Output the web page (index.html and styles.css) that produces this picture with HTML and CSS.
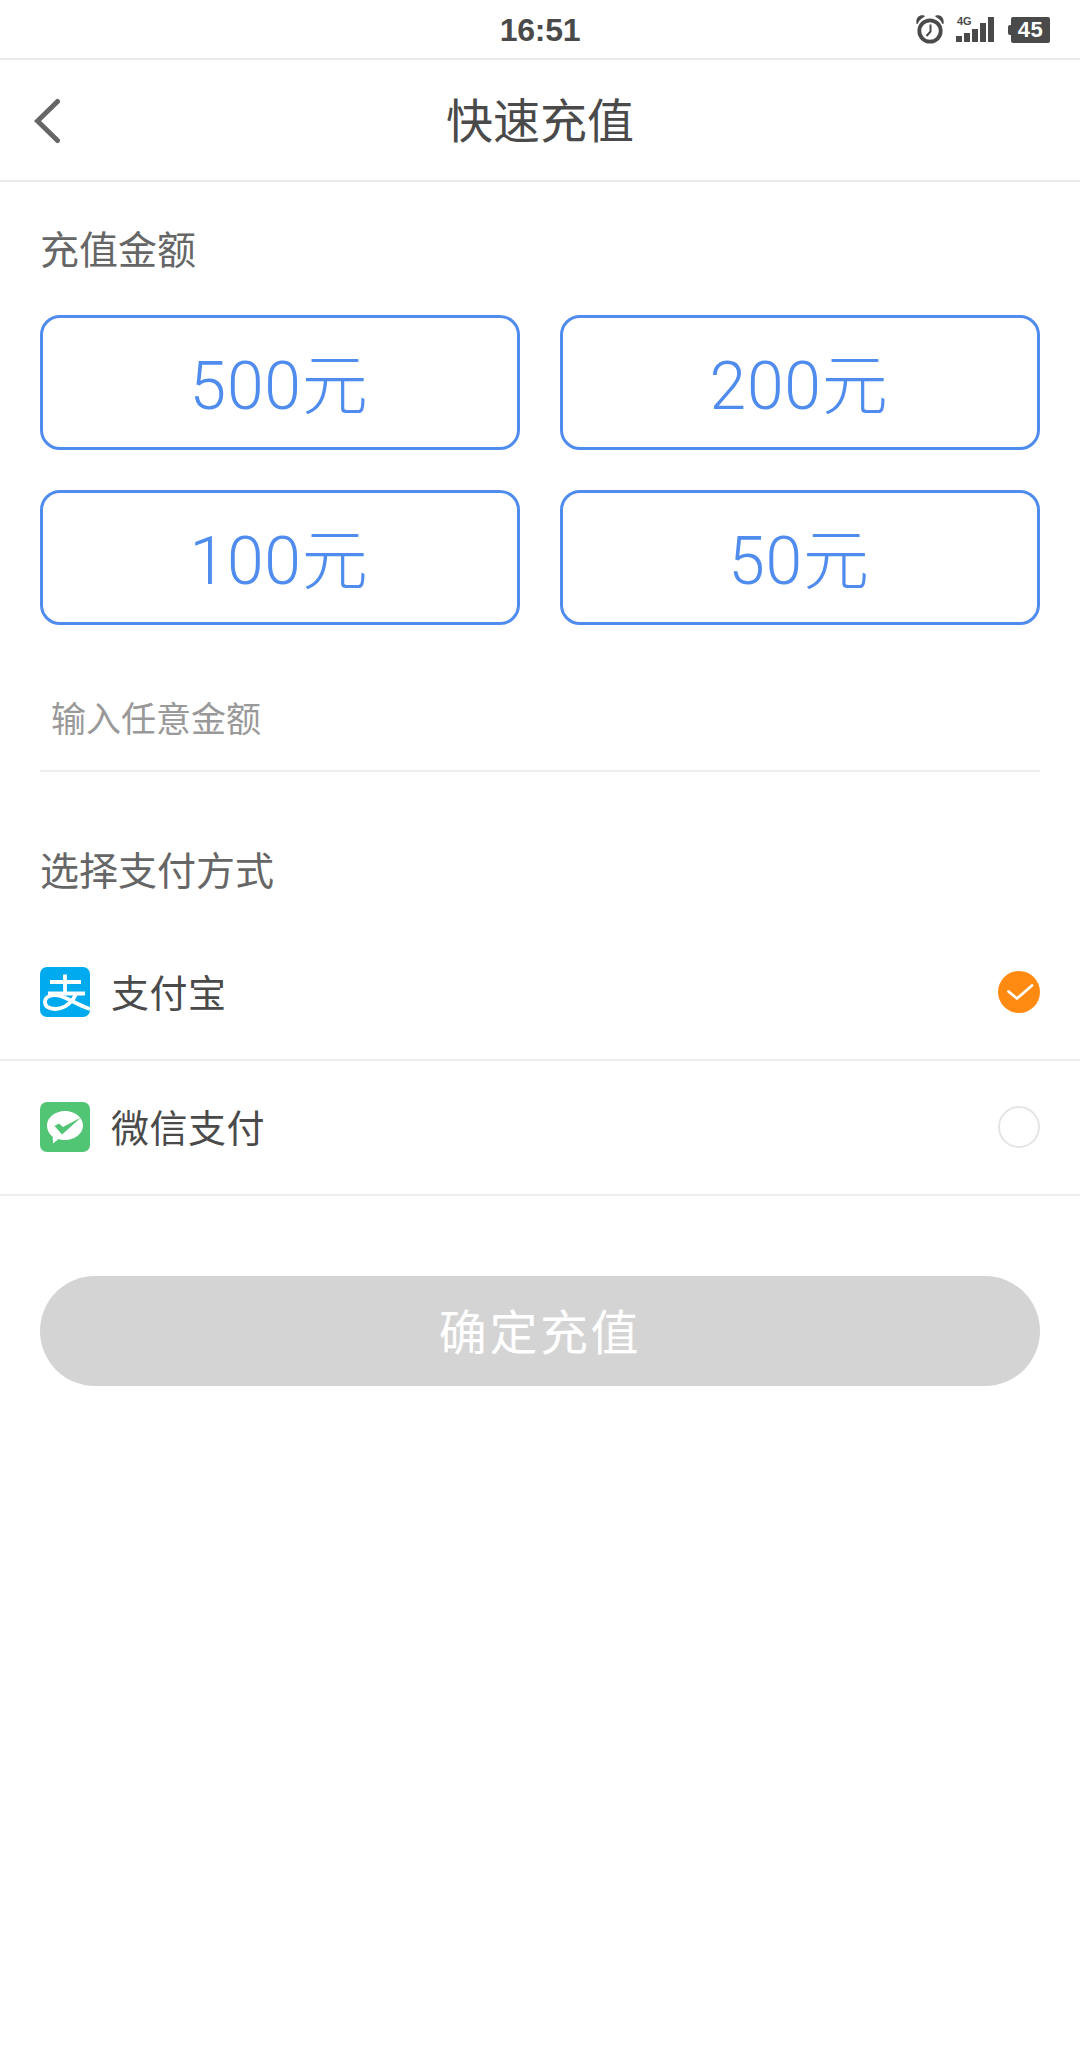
FILE: index.html
```html
<!DOCTYPE html>
<html lang="zh-CN">
<head>
  <meta charset="UTF-8">
  <meta name="viewport" content="width=device-width, initial-scale=1.0">
  <title>快速充值</title>
  <link rel="stylesheet" href="styles.css">
</head>
<body>

<!-- Status bar -->
<div class="status-bar">
  <span class="status-time">16:51</span>
  <div class="status-icons">
    <svg class="icon-alarm" width="28" height="30" viewBox="0 0 28 30">
      <circle cx="14" cy="17" r="10.700" fill="none" stroke="#4a4a4a" stroke-width="3.800"/>
      <path d="M14.500 10.500v7l-4 4.500" fill="none" stroke="#4a4a4a" stroke-width="2"/>
      <path d="M0.500 9.500C-.5 4 3 .5 8 1.500c.8.2 1 .8.4 1.200C5 4.500 3 6.500 1.800 9.700c-.3.600-1.100.500-1.300-.2zM27.500 9.500C28.500 4 25 .5 20 1.500c-.8.2-1 .8-.4 1.200 3.400 1.800 5.400 3.800 6.600 7 .3.600 1.100.500 1.300-.2z" fill="#4a4a4a"/>
    </svg>
    <div class="signal">
      <span class="signal-label">4G</span>
      <div class="signal-bars">
        <span class="bar bar-1"></span>
        <span class="bar bar-2"></span>
        <span class="bar bar-3"></span>
        <span class="bar bar-4"></span>
        <span class="bar bar-5"></span>
      </div>
    </div>
    <div class="battery">
      <span class="battery-cap"></span>
      <span class="battery-body">45</span>
    </div>
  </div>
</div>

<!-- Nav -->
<div class="nav">
  <svg class="nav-back" width="28" height="46" viewBox="0 0 28 46">
    <path d="M23.500 3.500L3.500 23l20 19.500" fill="none" stroke="#666" stroke-width="5" stroke-linecap="round"/>
  </svg>
  <h1 class="nav-title">快速充值</h1>
</div>

<!-- Amount -->
<div class="section">
  <div class="section-label">充值金额</div>
  <div class="amount-grid">
    <button class="amount-btn">500元</button>
    <button class="amount-btn">200元</button>
    <button class="amount-btn">100元</button>
    <button class="amount-btn">50元</button>
  </div>
  <div class="amount-input">输入任意金额</div>
  <div class="section-label pay-label">选择支付方式</div>
</div>

<!-- Pay methods -->
<div class="pay-row">
  <svg class="pay-icon" width="50" height="50" viewBox="0 0 50 50">
    <rect width="50" height="50" rx="7" fill="#00aaef"/>
    <path d="M10 15h31M25 7.500v18M8 26.500h37" fill="none" stroke="#fff" stroke-width="3.800"/>
    <path d="M36 26.500c-3 8-11 15.500-21 15.500-6 0-10-2.500-10-7 0-5.500 7-8 13.500-6.500 9 2 18 9 31.500 13.500" fill="none" stroke="#fff" stroke-width="3.800"/>
  </svg>
  <span class="pay-name">支付宝</span>
  <span class="radio radio-on">
    <svg width="42" height="42" viewBox="0 0 42 42">
      <path d="M10.500 20.500l8.500 7L34 14.500" fill="none" stroke="#fff" stroke-width="2.800" stroke-linecap="round" stroke-linejoin="round"/>
    </svg>
  </span>
</div>
<div class="pay-row">
  <svg class="pay-icon" width="50" height="50" viewBox="0 0 50 50">
    <rect width="50" height="50" rx="7" fill="#52c575"/>
    <path d="M25 9c10 0 18 6.500 18 14.500S35 38 25 38c-2.500 0-4.500-.4-6.500-1L13 41.500l-.3-6.700C9 32 7 28 7 23.500 7 15.500 15 9 25 9z" fill="#fff"/>
    <path d="M14.500 24l4.500-2.500 4 3.500 18-9.500L22 32.500z" fill="#52c575"/>
  </svg>
  <span class="pay-name">微信支付</span>
  <span class="radio"></span>
</div>

<div class="submit-wrap">
  <button class="submit-btn">确定充值</button>
</div>

</body>
</html>
```

FILE: styles.css
```css
* {
  box-sizing: border-box;
}

body {
  margin: 0;
  background: #fff;
  color: #4a4a4a;
  font-family: "Liberation Sans", "Noto Sans CJK SC", sans-serif;
}

.status-bar {
  height: 60px;
  padding-top: 3px;
  border-bottom: 2px solid #ebebeb;
  display: flex;
  justify-content: center;
  align-items: center;
  position: relative;
}

.status-time {
  font-size: 32px;
  font-weight: bold;
  letter-spacing: -0.3px;
  color: #4a4a4a;
}

.status-icons {
  position: absolute;
  top: 14px;
  left: 916px;
  display: flex;
  align-items: flex-start;
}

.signal {
  width: 40px;
  height: 28px;
  margin-left: 12px;
  position: relative;
}

.signal-label {
  position: absolute;
  top: 2px;
  left: 1px;
  font-size: 11px;
  line-height: 10px;
  font-weight: bold;
}

.signal-bars {
  position: absolute;
  left: 0;
  bottom: 0;
  display: flex;
  align-items: flex-end;
  gap: 2px;
}

.bar {
  width: 6px;
  background: #4a4a4a;
}

.bar-1 { height: 6px; }
.bar-2 { height: 9px; }
.bar-3 { height: 13px; }
.bar-4 { height: 19px; }
.bar-5 { height: 25px; }

.battery {
  display: flex;
  align-items: center;
  margin-left: 12px;
  margin-top: 3px;
}

.battery-cap {
  width: 3px;
  height: 10px;
  background: #4a4a4a;
  border-radius: 2px 0 0 2px;
}

.battery-body {
  width: 39px;
  height: 26px;
  background: #4a4a4a;
  border-radius: 2px;
  color: #fff;
  font-size: 22px;
  font-weight: bold;
  letter-spacing: 0.5px;
  line-height: 26px;
  text-align: center;
}

.nav {
  height: 122px;
  padding-bottom: 6px;
  border-bottom: 2px solid #ebebeb;
  display: flex;
  justify-content: center;
  align-items: center;
  position: relative;
}

.nav-back {
  position: absolute;
  left: 34px;
  top: 38px;
}

.nav-title {
  margin: 0;
  font-size: 47px;
  font-weight: normal;
  color: #4a4a4a;
}

.section {
  padding: 0 40px;
}

.section-label {
  font-size: 39px;
  line-height: 50px;
  color: #666;
  padding-top: 44px;
  height: 92px;
}

.amount-grid {
  margin-top: 41px;
  display: grid;
  grid-template-columns: 480px 480px;
  gap: 40px;
}

.amount-btn {
  height: 135px;
  padding: 0 2px 6px 0;
  background: #fff;
  border: 3px solid #4f8ced;
  border-radius: 20px;
  color: #4f8ced;
  font-family: Roboto, "Noto Sans CJK SC", sans-serif;
  font-size: 66px;
  font-weight: 300;
  letter-spacing: 0.8px;
}

.amount-input {
  height: 147px;
  padding: 72px 11px 0;
  border-bottom: 2px solid #eee;
  font-size: 35px;
  line-height: 46px;
  color: #999;
}

.pay-label {
  height: 154px;
  padding-top: 75px;
}

.pay-row {
  height: 135px;
  padding: 0 40px 1px;
  border-bottom: 2px solid #eee;
  display: flex;
  align-items: center;
}

.pay-icon {
  flex-shrink: 0;
}

.pay-name {
  margin-left: 21px;
  margin-bottom: 4px;
  font-size: 38px;
  letter-spacing: 0.5px;
  color: #4a4a4a;
}

.radio {
  width: 42px;
  height: 42px;
  margin-left: auto;
  border: 2px solid #e5e5e5;
  border-radius: 50%;
}

.radio-on {
  border: none;
  background: #ff8a11;
}

.radio-on svg {
  display: block;
}

.submit-wrap {
  padding: 80px 40px 0;
}

.submit-btn {
  width: 100%;
  height: 110px;
  padding: 0 0 4px;
  background: #d4d4d4;
  border: none;
  border-radius: 55px;
  color: #fff;
  font-family: inherit;
  font-size: 48px;
  letter-spacing: 2.600px;
}
```
